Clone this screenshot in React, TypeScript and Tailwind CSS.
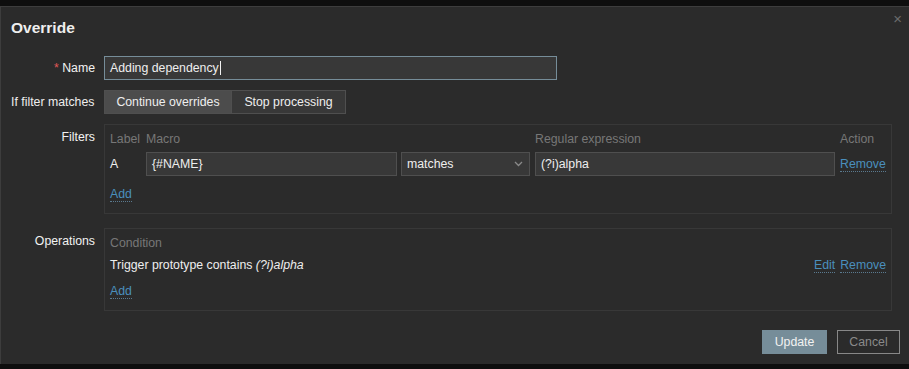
import { useState } from "react";

const font = { fontFamily: '"Liberation Sans", Arial, sans-serif' };

function LinkText({ children }: { children: React.ReactNode }) {
  return (
    <span className="cursor-pointer border-b border-dotted border-[#5a7a90] text-[#4a8fbd] leading-[14px]">
      {children}
    </span>
  );
}

function FieldLabel({ children }: { children: React.ReactNode }) {
  return (
    <div className="w-[94px] shrink-0 text-right text-[#f2f2f2]">
      {children}
    </div>
  );
}

export default function App() {
  const [mode, setMode] = useState("continue");

  return (
    <div className="h-[369px] w-[909px] overflow-hidden bg-[#0e0e0e] pt-[6px]" style={font}>
      <div className="relative h-[358px] border-l border-t border-[#3d3d3d] bg-[#2b2b2b] text-[12.3px] text-[#eeeeee]">
        {/* header */}
        <div className="flex h-[42px] items-center pl-[10px]">
          <h4 className="text-[15.5px] font-bold text-[#eeeeee]">Override</h4>
        </div>
        <button className="absolute right-[7px] top-[4px] text-[15px] leading-none text-[#6c6c6c]">
          ×
        </button>

        <div className="flex flex-col">
          {/* Name */}
          <div className="mt-[7px] flex items-center">
            <FieldLabel>
              <span className="text-[#e45959]">*</span> Name
            </FieldLabel>
            <div className="ml-[9px] flex h-[24px] w-[453px] items-center border border-[#768d99] bg-[#383838] px-[5px]">
              Adding dependency<span className="ml-px h-[14px] w-px bg-[#f2f2f2]" />
            </div>
          </div>

          {/* If filter matches */}
          <div className="mt-[10px] flex items-center">
            <div className="w-[103px] shrink-0 pl-[10px]">If filter matches</div>
            <div className="flex h-[24px]">
              <button
                onClick={() => setMode("continue")}
                className={`w-[128px] border border-[#4f4f4f] ${mode === "continue" ? "bg-[#4c4c4c]" : "bg-[#383838]"}`}
              >
                Continue overrides
              </button>
              <button
                onClick={() => setMode("stop")}
                className={`w-[114px] border border-l-0 border-[#4f4f4f] ${mode === "stop" ? "bg-[#4c4c4c]" : "bg-[#383838]"}`}
              >
                Stop processing
              </button>
            </div>
          </div>

          {/* Filters */}
          <div className="mt-[10px] flex items-start">
            <FieldLabel>
              <div className="mt-[4px]">Filters</div>
            </FieldLabel>
            <div className="ml-[9px] h-[90px] w-[788px] border border-[#383838] px-[5px] pt-[7px]">
              <div className="flex h-[14px] items-center text-[#777777]">
                <div className="w-[36px]">Label</div>
                <div className="w-[389px]">Macro</div>
                <div className="w-[305px]">Regular expression</div>
                <div>Action</div>
              </div>
              <div className="mt-[6px] flex h-[24px] items-center">
                <div className="w-[36px]">A</div>
                <div className="flex h-[24px] w-[251px] items-center border border-[#4f4f4f] bg-[#383838] px-[5px]">
                  {"{#NAME}"}
                </div>
                <div className="ml-[4px] flex h-[24px] w-[129px] items-center justify-between border border-[#4f4f4f] bg-[#383838] pl-[5px] pr-[6px]">
                  <span>matches</span>
                  <svg width="9" height="6" viewBox="0 0 9 6" fill="none">
                    <path d="M1 1l3.5 3.5L8 1" stroke="#8a8a8a" strokeWidth="1.3" />
                  </svg>
                </div>
                <div className="ml-[5px] flex h-[24px] w-[300px] items-center border border-[#4f4f4f] bg-[#383838] px-[5px]">
                  (?i)alpha
                </div>
                <div className="ml-[5px]">
                  <LinkText>Remove</LinkText>
                </div>
              </div>
              <div className="mt-[9px]">
                <LinkText>Add</LinkText>
              </div>
            </div>
          </div>

          {/* Operations */}
          <div className="mt-[14px] flex items-start">
            <FieldLabel>
              <div className="mt-[4px]">Operations</div>
            </FieldLabel>
            <div className="ml-[9px] h-[83px] w-[788px] border border-[#383838] px-[5px] pt-[7px]">
              <div className="flex h-[14px] items-center text-[#777777]">Condition</div>
              <div className="mt-[8px] flex h-[14px] items-center justify-between">
                <div>
                  Trigger prototype contains <i>(?i)alpha</i>
                </div>
                <div className="flex gap-[5px]">
                  <LinkText>Edit</LinkText>
                  <LinkText>Remove</LinkText>
                </div>
              </div>
              <div className="mt-[10px]">
                <LinkText>Add</LinkText>
              </div>
            </div>
          </div>

          {/* footer */}
          <div className="mt-[19px] flex justify-end gap-[10px] pr-[9px]">
            <button className="h-[24px] w-[65px] bg-[#768d99] text-[#f2f2f2]">Update</button>
            <button className="h-[24px] w-[63px] border border-[#888888] text-[#8a8a8a]">Cancel</button>
          </div>
        </div>
      </div>
    </div>
  );
}
